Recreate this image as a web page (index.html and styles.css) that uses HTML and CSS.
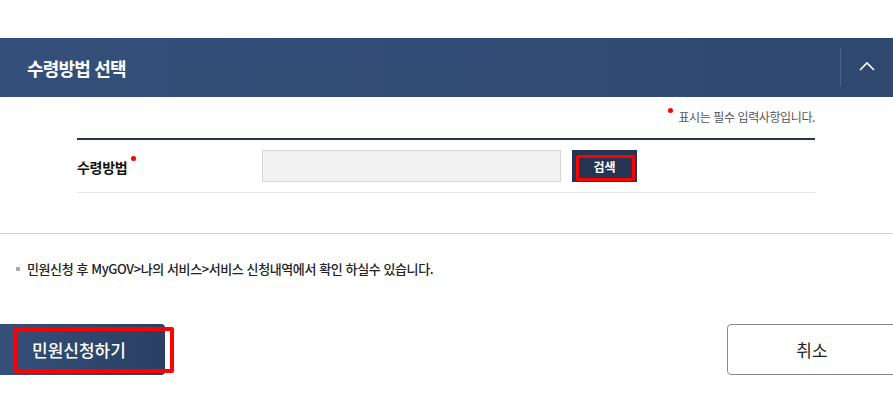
FILE: index.html
```html
<!DOCTYPE html>
<html lang="ko">
  <head>
    <meta charset="UTF-8" />
    <meta name="viewport" content="width=device-width, initial-scale=1.0" />
    <title>수령방법 선택</title>
    <link rel="stylesheet" href="styles.css">
  </head>
  <body>
    <section class="panel">
      <div class="panel-head">
        <h2 class="panel-title">수령방법 선택</h2>
        <button class="toggle" type="button" aria-label="접기">
          <svg width="16" height="10" viewBox="0 0 16 10">
            <polyline points="1,9 8,2 15,9" fill="none" stroke="#fff" stroke-width="1.6" />
          </svg>
        </button>
      </div>
      <div class="panel-body">
        <p class="req-note"><span class="dot"></span>표시는 필수 입력사항입니다.</p>
        <div class="form-table">
          <div class="form-row">
            <div class="label">수령방법<span class="dot"></span></div>
            <div class="field">
              <input class="text-input" type="text" readonly>
              <button class="btn-search" type="button">검색<span class="mark"></span></button>
            </div>
          </div>
        </div>
      </div>
    </section>

    <p class="notice">민원신청 후 MyGOV&gt;나의 서비스&gt;서비스 신청내역에서 확인 하실수 있습니다.</p>

    <div class="actions">
      <button class="btn-apply" type="button">민원신청하기<span class="mark"></span></button>
      <button class="btn-cancel" type="button">취소</button>
    </div>
  </body>
</html>
```

FILE: styles.css
```css
body {
  margin: 0;
  font-family: "Noto Sans CJK KR", "Noto Sans", sans-serif;
  color: #222;
  background: #fff;
  overflow: hidden;
}

.panel {
  margin-top: 38px;
  border-bottom: 1px solid #cfcfcf;
}

.panel-head {
  display: flex;
  align-items: center;
  justify-content: space-between;
  height: 59px;
  background: linear-gradient(90deg, #34507a, #2f486f);
}

.panel-title {
  margin: 0;
  padding-left: 27px;
  font-size: 18px;
  font-weight: bold;
  color: #fff;
  letter-spacing: -0.8px;
}

.toggle {
  display: flex;
  align-items: center;
  justify-content: center;
  width: 53px;
  height: 39px;
  padding: 0 0 4px;
  border: 0;
  border-left: 1px solid #4b6189;
  background: none;
}

.panel-body {
  padding: 10px 78px 40px 77px;
}

.dot {
  display: inline-block;
  width: 5px;
  height: 5px;
  border-radius: 50%;
  background: #f00;
}

.req-note {
  margin: 0 0 11px;
  line-height: 20px;
  font-size: 12px;
  color: #555;
  text-align: right;
  letter-spacing: -0.4px;
}

.req-note .dot {
  margin-right: 5px;
  vertical-align: 9px;
}

.form-table {
  border-top: 2px solid #263453;
}

.form-row {
  display: flex;
  align-items: center;
  height: 52px;
  border-bottom: 1px solid #e6e6e6;
}

.label {
  width: 185px;
  font-size: 14px;
  font-weight: bold;
  color: #111;
  letter-spacing: -0.3px;
}

.label .dot {
  margin-left: 4px;
  vertical-align: 12px;
}

.field {
  display: flex;
  gap: 11px;
}

.text-input {
  box-sizing: border-box;
  width: 299px;
  height: 32px;
  margin: 0;
  border: 1px solid #d6d6d6;
  background: #f2f2f2;
}

.btn-search {
  position: relative;
  width: 65px;
  height: 32px;
  border: 0;
  background: #263453;
  color: #fff;
  font-family: inherit;
  font-size: 12px;
  font-weight: bold;
}

.btn-search .mark {
  position: absolute;
  box-sizing: border-box;
  left: 4px;
  top: 5px;
  width: 59px;
  height: 26px;
  border: 3px solid #f00;
  border-radius: 2px;
}

.notice {
  margin: 26px 0 0;
  padding-left: 27px;
  position: relative;
  font-size: 13px;
  font-weight: 500;
  line-height: 18px;
  color: #222;
  letter-spacing: -0.4px;
}

.notice:before {
  content: "";
  position: absolute;
  left: 16px;
  top: 7px;
  width: 4px;
  height: 4px;
  background: #aaa;
}

.actions {
  display: flex;
  justify-content: space-between;
  margin-top: 46px;
}

.btn-apply {
  position: relative;
  width: 165px;
  height: 51px;
  padding: 0 0 0 32px;
  border: 0;
  border-radius: 0 4px 4px 0;
  background: linear-gradient(90deg, #34507a, #2a3f62);
  color: #fff;
  font-family: inherit;
  font-size: 17px;
  font-weight: 500;
  text-align: left;
}

.btn-apply .mark {
  position: absolute;
  box-sizing: border-box;
  left: 14px;
  top: 3px;
  width: 160px;
  height: 46px;
  border: 4px solid #f00;
  border-radius: 2px;
}

.btn-cancel {
  width: 170px;
  height: 51px;
  margin-right: -4px;
  border: 1px solid #8a8a8a;
  border-radius: 4px;
  background: #fff;
  color: #222;
  font-family: inherit;
  font-size: 17px;
}
```
